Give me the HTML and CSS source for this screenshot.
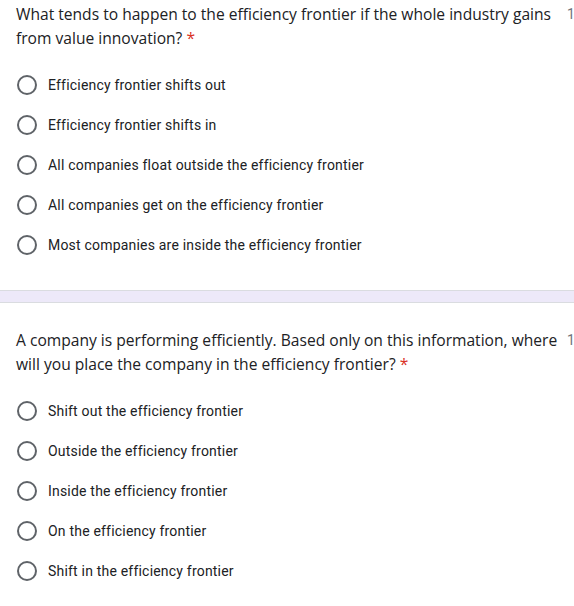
FILE: index.html
```html
<!DOCTYPE html>
<html>
<head>
<meta charset="utf-8">
<link rel="stylesheet" href="styles.css">
</head>
<body>
<div class="page">
  <section class="card card-first">
    <div class="q-header">
      <div class="q-title">What tends to happen to the efficiency frontier if the whole industry gains from value innovation? <span class="req">*</span></div>
      <div class="q-points">1 point</div>
    </div>
    <div class="options">
      <div class="option"><span class="radio"></span><span class="label">Efficiency frontier shifts out</span></div>
      <div class="option"><span class="radio"></span><span class="label">Efficiency frontier shifts in</span></div>
      <div class="option"><span class="radio"></span><span class="label">All companies float outside the efficiency frontier</span></div>
      <div class="option"><span class="radio"></span><span class="label">All companies get on the efficiency frontier</span></div>
      <div class="option"><span class="radio"></span><span class="label">Most companies are inside the efficiency frontier</span></div>
    </div>
  </section>
  <div class="band"></div>
  <section class="card">
    <div class="q-header">
      <div class="q-title">A company is performing efficiently. Based only on this information, where will you place the company in the efficiency frontier? <span class="req">*</span></div>
      <div class="q-points">1 point</div>
    </div>
    <div class="options">
      <div class="option"><span class="radio"></span><span class="label">Shift out the efficiency frontier</span></div>
      <div class="option"><span class="radio"></span><span class="label">Outside the efficiency frontier</span></div>
      <div class="option"><span class="radio"></span><span class="label">Inside the efficiency frontier</span></div>
      <div class="option"><span class="radio"></span><span class="label">On the efficiency frontier</span></div>
      <div class="option"><span class="radio"></span><span class="label">Shift in the efficiency frontier</span></div>
    </div>
  </section>
</div>
</body>
</html>
```

FILE: styles.css
```css
html, body {
  margin: 0;
  padding: 0;
  background: #ffffff;
  overflow: hidden;
}

.page {
  width: 574px;
  overflow: hidden;
}

.card {
  padding: 25px 0 15px 16px;
}

.card-first {
  padding-top: 2px;
  padding-bottom: 25px;
}

.q-header {
  display: flex;
  width: 640px;
}

.q-title {
  width: 545px;
  flex: none;
  font-family: "Open Sans", "Liberation Sans", sans-serif;
  font-size: 15.6px;
  line-height: 24px;
  color: #202124;
}

.req {
  color: #d93025;
}

.q-points {
  flex: none;
  margin-left: 6px;
  font-family: Roboto, "Liberation Sans", sans-serif;
  font-size: 14px;
  line-height: 24px;
  color: #70757a;
}

.options {
  margin-top: 15px;
  display: flex;
  flex-direction: column;
}

.option {
  display: flex;
  align-items: center;
  height: 40px;
}

.radio {
  box-sizing: border-box;
  width: 20px;
  height: 20px;
  margin-left: 1px;
  border: 2px solid #5f6368;
  border-radius: 50%;
  flex: none;
}

.label {
  margin-left: 11px;
  font-family: Roboto, "Liberation Sans", sans-serif;
  font-size: 14px;
  letter-spacing: 0.2px;
  color: #202124;
}

.band {
  height: 11px;
  background: #ede9f9;
  border-top: 1px solid #dadce0;
  border-bottom: 1px solid #dadce0;
}
```
